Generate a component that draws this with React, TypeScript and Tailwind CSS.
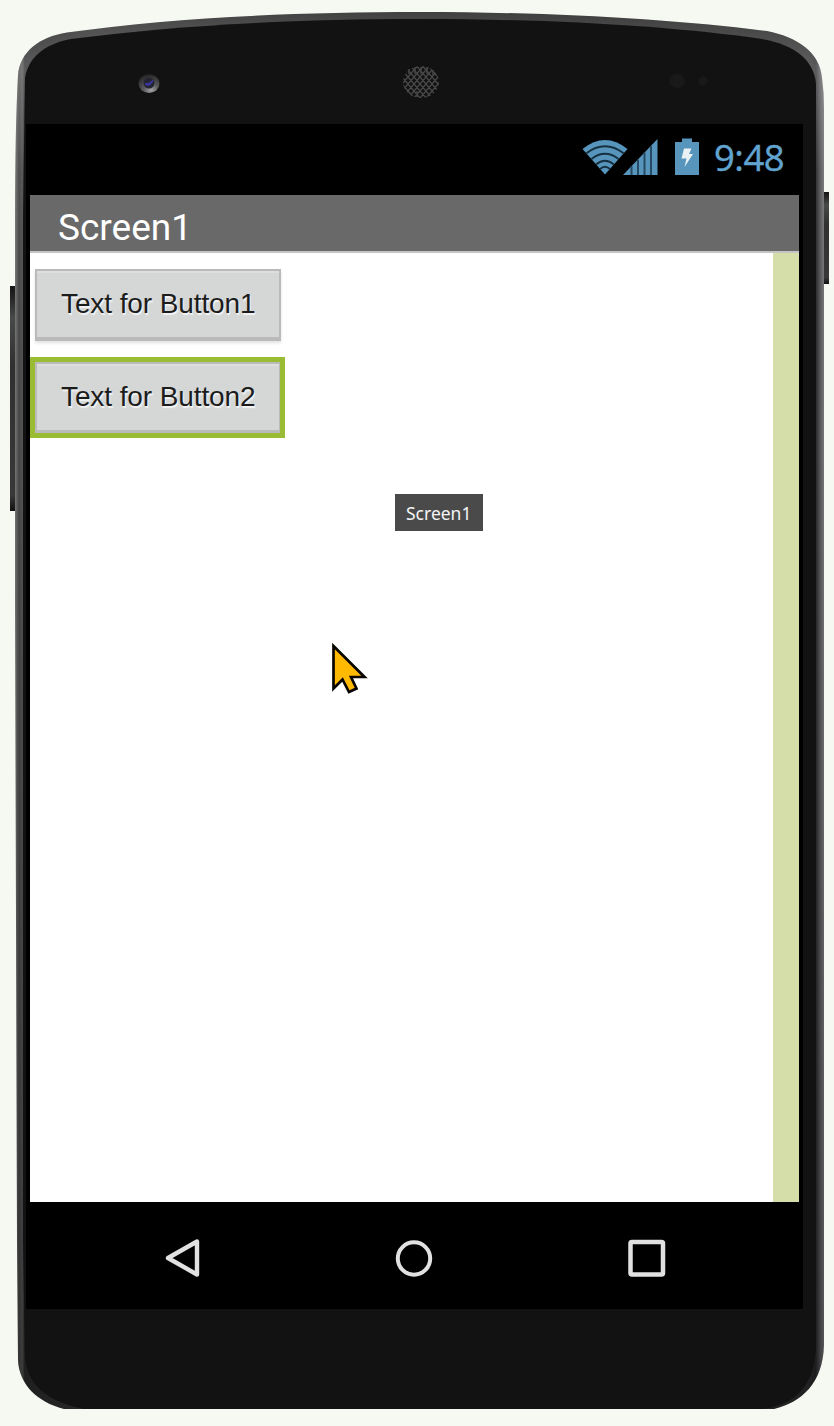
import React from 'react';

const bodyPath =
  'M18 75 C20 52 39 37 67 32.5 C170 18 290 12 420 12 C550 12 670 19 767 31 C797 37 820 52 822 78 Q824 92 824 108 V1345 C823 1383 802 1402 774 1409 H64 C37 1402 19 1384 18 1360 L17 1240 L15 600 L15 220 Q15 130 18 75 Z';
const facePath =
  'M25 78 C28 58 44 44 71 39 C170 26 290 19 420 19 C550 19 670 26 762 39 C795 45 814 60 816 84 V1345 C815 1383 799 1403 764 1409 H84 C48 1402 26 1385 25 1355 L23 1240 V220 Z';

function PhoneBody() {
  return (
    <svg className="absolute inset-0" width="834" height="1426" viewBox="0 0 834 1426">
      <defs>
        <linearGradient id="rim" x1="15" x2="824" y1="0" y2="0" gradientUnits="userSpaceOnUse">
          <stop offset="0" stopColor="#777" />
          <stop offset="0.005" stopColor="#454545" />
          <stop offset="0.009" stopColor="#555" />
          <stop offset="0.012" stopColor="#2b2b2d" />
          <stop offset="0.1" stopColor="#3c3c3c" />
          <stop offset="0.98" stopColor="#303030" />
          <stop offset="0.99" stopColor="#29292b" />
          <stop offset="0.995" stopColor="#56565a" />
          <stop offset="1" stopColor="#777" />
        </linearGradient>
        <linearGradient id="fade" x1="0" x2="0" y1="0" y2="1426" gradientUnits="userSpaceOnUse">
          <stop offset="0" stopColor="#fff" stopOpacity="0" />
          <stop offset="0.05" stopColor="#ccc" stopOpacity="0.3" />
          <stop offset="0.12" stopColor="#ccc" stopOpacity="0.06" />
          <stop offset="0.3" stopColor="#000" stopOpacity="0" />
          <stop offset="1" stopColor="#000" stopOpacity="0.3" />
        </linearGradient>
        <linearGradient id="key" x1="0" x2="0" y1="0" y2="1">
          <stop offset="0" stopColor="#151515" />
          <stop offset="0.06" stopColor="#282828" />
          <stop offset="0.14" stopColor="#484a49" />
          <stop offset="0.35" stopColor="#303030" />
          <stop offset="0.93" stopColor="#383838" />
          <stop offset="1" stopColor="#101010" />
        </linearGradient>
        <pattern id="mesh" width="6" height="7" patternUnits="userSpaceOnUse">
          <path d="M0 0 L3 3.5 L6 0 M0 7 L3 3.5 L6 7" fill="none" stroke="#4a4a4a" strokeWidth="1.2" />
        </pattern>
        <radialGradient id="lens" cx="0.6" cy="0.85" r="0.85">
          <stop offset="0" stopColor="#a3a3a3" />
          <stop offset="0.4" stopColor="#5c5c5f" />
          <stop offset="1" stopColor="#222" />
        </radialGradient>
      </defs>
      <path d="M10 286 H17 V511 H10 Z" fill="url(#key)" />
      <path d="M823 192 H829 V284 H823 Z" fill="url(#key)" />
      <path d={bodyPath} fill="url(#rim)" />
      <path d={bodyPath} fill="url(#fade)" />
      <path d={facePath} fill="#121212" />
      <ellipse cx="149" cy="83.5" rx="10.5" ry="9.5" fill="url(#lens)" />
      <circle cx="149" cy="83" r="5.5" fill="#252532" />
      <path d="M145 84 Q150 88 153 80 Q150 84 145 84 Z" fill="#3b36a5" stroke="#3b36a5" />
      <ellipse cx="421" cy="82" rx="18" ry="16" fill="url(#mesh)" />
      <path d="M417 97 V91 M409 69 V74 M415 67 V74 M421 67 V74 M427 67 V74 M433 70 V75" stroke="#444" strokeWidth="1.6" />
      <ellipse cx="677" cy="81" rx="8" ry="7" fill="#191919" />
      <circle cx="703" cy="81" r="4.5" fill="#191919" />
    </svg>
  );
}

function WifiIcon() {
  return (
    <svg width="46" height="36" viewBox="0 0 46 36">
      <path d="M0.5 10 Q23 -8 45.5 10 L23 35.5 Z" fill="#5795bd" />
      <path d="M4 14.5 Q23 0 42 14.5 M9.5 20 Q23 9.5 36.5 20 M14 25.5 Q23 18 32 25.5 M18 30 Q23 25.5 28 30" fill="none" stroke="#16303f" strokeWidth="1.8" />
    </svg>
  );
}

function SignalIcon() {
  return (
    <svg width="35" height="36" viewBox="0 0 35 36">
      <path d="M0 36 L34.5 0 V36 Z" fill="#5795bd" />
      <path d="M8.5 27 V36 M15 20.5 V36 M21.5 13.5 V36 M28 7 V36" stroke="#254a61" strokeWidth="2" />
    </svg>
  );
}

function BatteryIcon() {
  return (
    <svg width="24" height="37" viewBox="0 0 24 37">
      <path d="M7 0.5 H17 V4 H24 V37 H0 V4 H7 Z" fill="#5795bd" />
      <path d="M9 10.5 H16.5 L14 16 H18 L9.5 29 L11.5 20.5 H6.5 Z" fill="#e9f1f5" />
    </svg>
  );
}

function StatusBar() {
  return (
    <div className="flex h-[71px] items-start bg-black pl-[556px] pt-[14px]">
      <div className="pt-px"><WifiIcon /></div>
      <div className="-ml-[5px] pt-px"><SignalIcon /></div>
      <div className="ml-[17px]"><BatteryIcon /></div>
      <span className="ml-[15px] mt-px whitespace-nowrap font-['Open_Sans',sans-serif] text-[36.5px] leading-[36px] tracking-[-0.5px] text-[#62a4d0] [-webkit-text-stroke:0.4px_#62a4d0]">
        9:48
      </span>
    </div>
  );
}

function AppButton({ label }: { label: string }) {
  return (
    <button className="block h-[72px] w-[246px] whitespace-nowrap border-2 border-b-4 border-[#bababa] bg-[#d5d7d6] pl-[24px] text-left font-['Liberation_Sans',Arial,sans-serif] text-[28px] leading-[66px] tracking-[-0.1px] text-[#1c1c1c] shadow-[0_2px_3px_rgba(0,0,0,0.12),inset_0_2px_0_#dedede] [text-shadow:1px_2px_1px_#f4f4f4]">
      {label}
    </button>
  );
}

function NavBar() {
  return (
    <div className="flex h-[107px] items-start bg-black pl-[138px] pt-[36px]">
      <svg width="37" height="40" viewBox="0 0 37 40">
        <path d="M33 3.5 V36.5 L4 20 Z" fill="none" stroke="#e1e1e1" strokeWidth="4.4" strokeLinejoin="round" />
      </svg>
      <svg className="ml-[193px]" width="40" height="40" viewBox="0 0 40 40">
        <circle cx="20" cy="20.5" r="16.2" fill="none" stroke="#e1e1e1" strokeWidth="4" />
      </svg>
      <svg className="ml-[193px]" width="40" height="40" viewBox="0 0 40 40">
        <rect x="3.5" y="4" width="32.5" height="32.5" rx="1.5" fill="none" stroke="#e1e1e1" strokeWidth="4.5" />
      </svg>
    </div>
  );
}

export default function App() {
  return (
    <main className="relative h-[1426px] w-[834px] overflow-hidden bg-[#f6f9f2]">
      <PhoneBody />
      <div className="relative pl-[26px] pt-[124px]">
        <div className="flex w-[777px] flex-col bg-black">
          <StatusBar />
          <div className="mx-1 flex h-[1007px] flex-col bg-white">
            <header className="h-[58px] border-b-2 border-[#c4c4c4] bg-[#696969] pl-[28px] pt-[10px] font-[Roboto,sans-serif] text-[37px] leading-[45px] text-white">
              Screen1
            </header>
            <div className="flex flex-1">
              <section className="flex-1 pt-[16px]">
                <div className="pl-[5px]"><AppButton label="Text for Button1" /></div>
                <div className="mt-[16px] h-[81px] w-[255px] overflow-hidden border-[5px] border-[#9abc34]">
                  <AppButton label="Text for Button2" />
                </div>
              </section>
              <div className="w-[26px] bg-[#d5dda9]" />
            </div>
          </div>
          <NavBar />
        </div>
      </div>
      <div className="absolute left-[395px] top-[494px] h-[37px] w-[88px] bg-[#4a4a4a] pl-[11px] font-['Noto_Sans',sans-serif] text-[17.5px] leading-[38px] text-[#f4f4f4]">
        Screen1
      </div>
      <svg className="absolute left-[330px] top-[641px]" width="40" height="54" viewBox="0 0 40 54">
        <path d="M3.5 5 V47.5 L12.5 38.5 L19 51 L26.5 47.5 L21 36 H34.5 Z" fill="#ffb900" stroke="#080500" strokeWidth="2.7" />
      </svg>
    </main>
  );
}
